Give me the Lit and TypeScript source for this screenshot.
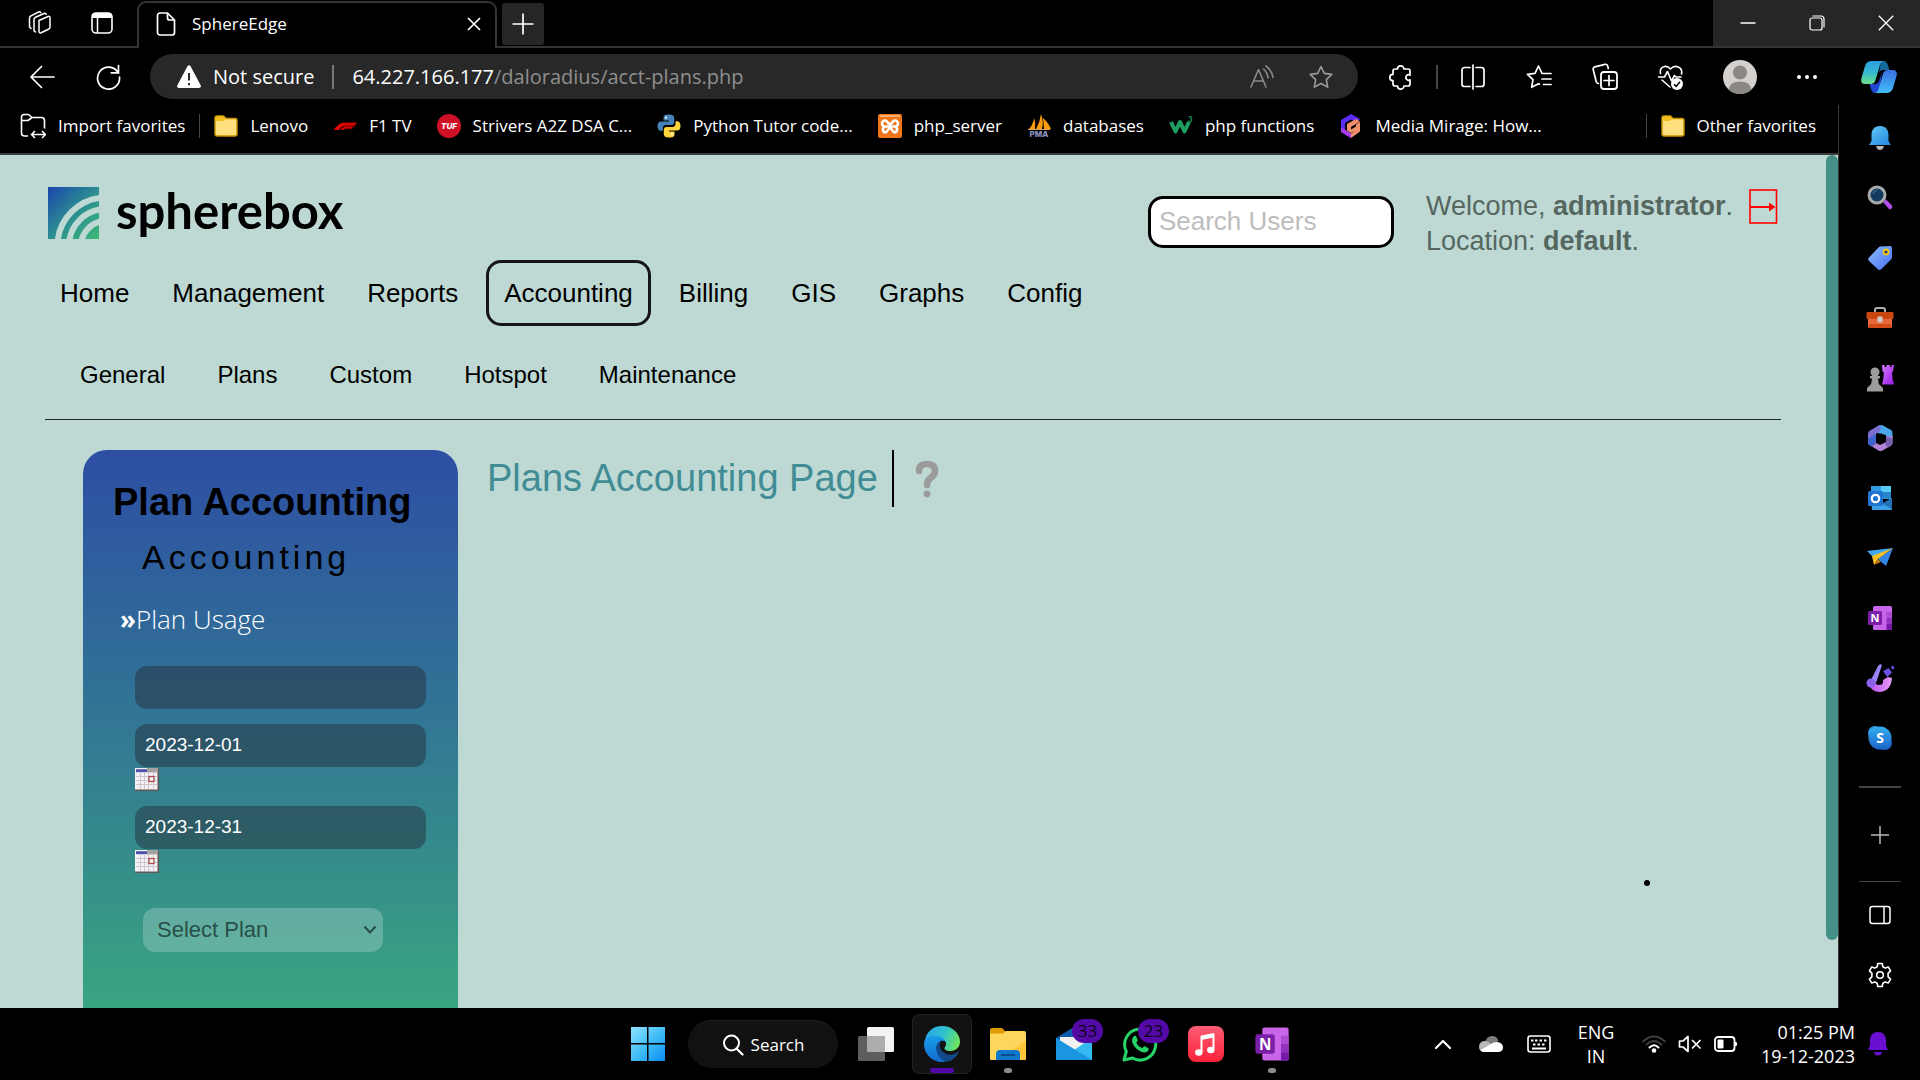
import { LitElement, html, svg, css, TemplateResult, SVGTemplateResult } from "lit";
import { customElement } from "lit/decorators.js";

const icon = (w: number, h: number, body: SVGTemplateResult): TemplateResult =>
  html`<svg width=${w} height=${h} viewBox="0 0 ${w} ${h}" fill="none" aria-hidden="true">${body}</svg>`;

/* ---------- browser chrome ---------- */

const workspaces = icon(26, 26, svg`<g stroke="#fff" stroke-width="1.5" stroke-linejoin="round" stroke-linecap="round">
  <path d="M13 10.500l9-4q2-.8 2 1.500v9q0 1.500-1.500 2.200l-7.500 3.500q-2 .8-2-1.500z"/>
  <path d="M9.500 22l-1.500-1.200V9.500q0-1.500 1.500-2.200L18 3.500q1.500-.6 2.200.8"/>
  <path d="M5 18.500l-1.500-1.500V8q0-1.500 1.500-2.200L12.500 2q1.500-.6 2.200.6"/></g>`);
const tabActions = icon(24, 24, svg`<rect x="2" y="2" width="20" height="20" rx="4" stroke="#fff" stroke-width="1.600"/>
  <path d="M2 7V5a3 3 0 013-3h14a3 3 0 013 3v2z" fill="#fff"/><path d="M7.500 7v15" stroke="#fff" stroke-width="1.500"/>`);
const pageIcon = icon(20, 26, svg`<path d="M4 2h7.500l7 7v12.500a2.500 2.500 0 01-2.500 2.500H4a2.500 2.500 0 01-2.500-2.500v-17A2.500 2.500 0 014 2zM11.500 2v5a2 2 0 002 2h5" stroke="#fff" stroke-width="1.700" stroke-linejoin="round"/>`);
const closeSmall = icon(14, 14, svg`<path d="M1 1l12 12M13 1L1 13" stroke="#fff" stroke-width="1.700"/>`);
const plusTab = icon(22, 22, svg`<path d="M11 .5v21M.5 11h21" stroke="#fff" stroke-width="1.700"/>`);
const minimize = icon(16, 16, svg`<path d="M.5 8h15" stroke="#fff" stroke-width="1.500"/>`);
const restore = icon(16, 16, svg`<rect x="1" y="3" width="12" height="12" rx="2" stroke="#fff" stroke-width="1.200"/><path d="M3.500 1h8.500a3 3 0 013 3v8.500" stroke="#fff" stroke-width="1.200"/>`);
const closeBig = icon(16, 16, svg`<path d="M.8.8l14.400 14.400M15.200.8L.8 15.200" stroke="#fff" stroke-width="1.300"/>`);

const back = icon(26, 24, svg`<path d="M12.500 1.500L2 12l10.500 10.500M2 12h23" stroke="#fff" stroke-width="1.700" stroke-linecap="round" stroke-linejoin="round"/>`);
const reload = icon(26, 26, svg`<path d="M23 8.500A11 11 0 1024.500 13M23.500 1.500v7.300h-7.300" stroke="#fff" stroke-width="1.700" stroke-linecap="round"/>`);
const warning = icon(26, 24, svg`<path d="M11.300 1.500q1.700-2.600 3.400 0l9.800 18.500q1.200 2.800-1.500 3H3q-2.700-.2-1.500-3z" fill="#fff"/><path d="M13 8v7.500M13 18v2.200" stroke="#292929" stroke-width="2"/>`);
const readAloud = icon(26, 24, svg`<path d="M2 22L9.500 4.500 17 22M4.800 16h9.500M14.500 4q4 3.500 4.500 9M17 1q6 4.500 7 11.500" stroke="#8a8a8a" stroke-width="1.600" stroke-linecap="round" stroke-linejoin="round"/>`);
const star = icon(26, 26, svg`<path d="M13 2.500l3.300 6.900 7.500 1-5.500 5.200 1.400 7.500L13 19.500l-6.700 3.600 1.400-7.500-5.500-5.200 7.500-1z" stroke="#9a9a9a" stroke-width="1.600" stroke-linejoin="round"/>`);
const puzzle = icon(26, 26, svg`<path d="M9.500 5a3.200 3.200 0 016.400 0H20a2 2 0 012 2v4.200a2.700 2.700 0 100 4.600V20a2 2 0 01-2 2h-4.100a3.200 3.200 0 01-6.400 0H7a2 2 0 01-2-2v-3.300a3.200 3.200 0 010-6.400V7a2 2 0 012-2z" stroke="#fff" stroke-width="1.700" stroke-linejoin="round"/>`);
const split = icon(26, 26, svg`<path d="M10 3.500H4.500a2.500 2.500 0 00-2.500 2.500v14a2.500 2.500 0 002.500 2.500H10M16 3.500h5.500A2.500 2.500 0 0124 6v14a2.500 2.500 0 01-2.500 2.500H16M13 1v24" stroke="#fff" stroke-width="1.700" stroke-linecap="round"/>`);
const favorites = icon(26, 26, svg`<path d="M17 9.500h-1L12.500 2 9 9.300l-7.500 1 5.500 5.400-1.400 7.600 6.900-3.500.8.300M17.500 9.500h7.500M16 15h9M17.500 20.500H25" stroke="#fff" stroke-width="1.700" stroke-linecap="round" stroke-linejoin="round"/>`);
const collections = icon(28, 28, svg`<rect x="10" y="9" width="16" height="17" rx="3" stroke="#fff" stroke-width="1.800"/><path d="M18 12.500v10M13 17.500h10M7.500 20.500q-1.800-.2-2.300-2L2.300 7q-.6-2.300 1.500-3.200L14 1.300q2-.3 2.600 1.500l.7 2.700" stroke="#fff" stroke-width="1.700" stroke-linecap="round"/>`);
const health = icon(28, 28, svg`<path d="M3.500 10.500C2 4 9 .8 13.500 6 18 .8 26 4 24.500 11M5 17l8 7M1.500 14h6l3-5.500 4 9.500 3-5.500 1.500 1.500h5" stroke="#fff" stroke-width="1.600" stroke-linecap="round" stroke-linejoin="round"/><circle cx="20" cy="21" r="6" fill="#fff"/><path d="M17 21.200l2.200 2.200 3.800-4.600" stroke="#000" stroke-width="1.500"/>`);
const avatar = icon(34, 34, svg`<circle cx="17" cy="17" r="17" fill="#d3d0cd"/><circle cx="17" cy="12.500" r="7" fill="#8b8783"/><path d="M5.500 29.500Q7 21.500 17 21.500t11.500 8A17 17 0 0117 34a17 17 0 01-11.500-4.500z" fill="#8b8783"/>`);
const more = icon(22, 6, svg`<g fill="#fff"><circle cx="3" cy="3" r="2"/><circle cx="11" cy="3" r="2"/><circle cx="19" cy="3" r="2"/></g>`);
const copilot = icon(36, 32, svg`<defs>
  <linearGradient id="ca" x1="0" y1="0" x2="0" y2="1"><stop stop-color="#2b9fe0"/><stop offset=".5" stop-color="#36b8d0"/><stop offset="1" stop-color="#6ee08a"/></linearGradient>
  <linearGradient id="cb" x1="0" y1="0" x2="0" y2="1"><stop stop-color="#3a6fe0"/><stop offset="1" stop-color="#42bdf8"/></linearGradient></defs>
  <path d="M20 0h2q4 0 5.200 5l1 4H22q-3 0-4 3z" fill="#176a9c"/>
  <path d="M16 32h-2q-3 0-4-4l-1.500-5H14q3 0 4-3l3-9-2.500 17z" fill="#1f44d0"/>
  <path d="M11 0h12q-3 .5-4 4l-4.500 15q-1 4-5 4H4q-5 0-3.500-6L4 5q1.500-5 7-5z" fill="url(#ca)"/>
  <path d="M25 32H14q2.500-.5 3.500-4l4.500-15q1-4 5-4h5q5 0 3.500 6L32 27q-1.500 5-7 5z" fill="url(#cb)"/>`);

/* ---------- bookmark icons ---------- */

const importFav = icon(26, 26, svg`<path d="M8 23H4.500A3 3 0 011.500 20V4a2.500 2.500 0 012.500-2.500h4.500L12 4.500h9.500a3 3 0 013 3v8M1.500 7.500H8l4-3" stroke="#fff" stroke-width="1.600" stroke-linejoin="round"/><path d="M12 21.500h13M15 18l-3.500 3.500L15 25M22 18l3.500 3.500L22 25" stroke="#fff" stroke-width="1.500"/>`);
const folder = icon(24, 24, svg`<path d="M1 4a2 2 0 012-2h6.500L12 4.500h9a2 2 0 012 2V20a2 2 0 01-2 2H3a2 2 0 01-2-2z" fill="#ffdf7e" stroke="#c79400" stroke-width="1.400"/><path d="M1.500 7V4A1.500 1.500 0 013 2.500h6.200l2.300 2.200L9 7z" fill="#f0bf1f"/>`);
const f1 = icon(24, 24, svg`<path d="M1 15.500l4-4Q7.500 9 11 9h12.500l-2.300 2.300H12q-2 0-3.300 1.300L6 15.500zM8 15.500l1.800-1.800q.8-.9 2.500-.9h7l-1.300 1.400h-5q-1 0-1.500.6l-.7.7zM18 15.500l3.800-3.800" fill="#e10600" stroke="#e10600" stroke-width=".8"/>`);
const tuf = icon(24, 24, svg`<circle cx="12" cy="12" r="12" fill="#ce1126"/><text x="12" y="15" text-anchor="middle" font-family="Inter, sans-serif" font-size="8" font-weight="800" font-style="italic" fill="#fff">TUF</text>`);
const python = icon(24, 24, svg`<path d="M12 .5c-5 0-5.500 1.500-5.500 3.500v2.500H12v1H4C1.500 7.500.5 9.500.5 12s1 4.800 3 4.800h2.300V14c0-1.800 1.500-3 3.200-3h5.500c1.700 0 2.700-1.200 2.700-2.700V4C17.200 1.500 15.500.5 12 .5z" fill="#4683b8"/><circle cx="9" cy="3.700" r="1.100" fill="#fff"/><path d="M12 23.500c5 0 5.500-1.500 5.500-3.500v-2.500H12v-1h8c2.500 0 3.500-2 3.500-4.500s-1-4.800-3-4.800h-2V10c0 1.800-1.500 3-3.200 3H9.500c-1.700 0-2.700 1.200-2.700 2.700V20c0 2.500 1.700 3.500 5.200 3.500z" fill="#ffd53e"/><circle cx="15" cy="20.300" r="1.100" fill="#fff"/>`);
const xampp = icon(24, 24, svg`<rect width="24" height="24" rx="2" fill="#ef7518"/><path d="M2 2h20" stroke="#ffc18d" stroke-width="1.500"/><path d="M7 18.500a3.200 3.200 0 010-6h10a3.200 3.200 0 010 6c-3 0-2-4-5-4s-2 4-5 4zM7 6.500a3 3 0 000 6h10a3 3 0 000-6c-3 0-2 3.500-5 3.500s-2-3.500-5-3.500z" stroke="#fff" stroke-width="2.600"/>`);
const pma = icon(24, 24, svg`<path d="M2 15Q6 11 7 4q2 5 1 11zM9 15q4-7 5-15 3 8 1 15zM17 15q-.5-6-1-11 5 4 8 11z" fill="#f89c0e"/><path d="M1 15.500h22" stroke="#d9a85b" stroke-width="1"/><text x="12" y="23" text-anchor="middle" font-family="Inter, sans-serif" font-size="8" font-weight="800" fill="#8e91bd">PMA</text>`);
const w3 = icon(24, 24, svg`<path d="M2 8l4.500 9.500L11 8l4.500 9.500L20 8" stroke="#1f9d62" stroke-width="4" stroke-linejoin="round"/><text x="19" y="8" font-family="Inter, sans-serif" font-size="7" font-weight="700" fill="#1f9d62">3</text>`);
const mirage = icon(24, 24, svg`<path d="M12 0l9 5-3.500 3.500L12 5.500 6 9v7l6 3.500v4.500l-10-6V6z" fill="#5b2cf5"/><path d="M12 19.500V24L2 18v-5l4 2.500z" fill="#a53af0"/><path d="M8 10l9-5 4 2.500-9 5.500v2.500l5-3v-2l4-2.500v9.500L12 24v-4.500l5-3-5 2.500-4-2.500z" fill="#f0906b"/>`);

/* ---------- sidebar icons ---------- */

const sBell = icon(26, 28, svg`<defs><linearGradient id="sb" x1="0" y1="0" x2="1" y2="1"><stop stop-color="#63c8f6"/><stop offset="1" stop-color="#2387e0"/></linearGradient></defs><path d="M9 22h8q-1 4-4 4t-4-4z" fill="#b8b8b8"/><path d="M13 2c6 0 8.500 4 8.500 9v6l2.500 4H2l2.500-4v-6c0-5 2.500-9 8.500-9z" fill="url(#sb)"/>`);
const sSearch = icon(26, 26, svg`<path d="M16 17l3-2.500 6 6q1 3-2.500 4z" fill="#b44df0"/><circle cx="10" cy="10" r="8" fill="#123a5c" stroke="#a9a9a9" stroke-width="3"/><path d="M6 9q1-3.500 5-4" stroke="#315f86" stroke-width="1.500"/>`);
const sTag = icon(26, 26, svg`<defs><linearGradient id="stg" x1="0" y1="0" x2="1" y2="1"><stop stop-color="#8ac0ff"/><stop offset="1" stop-color="#4a6df0"/></linearGradient></defs><path d="M13.500 1.500L23 1q2 0 2 2v9q0 1.500-1 2.500l-9.500 9.500q-2 1.800-4 0L2 16q-1.500-2 0-3.500L11.500 2.500q1-.9 2-1z" fill="url(#stg)"/><circle cx="19" cy="7" r="2.500" stroke="#f0cb12" stroke-width="1.800" fill="#363680"/>`);
const sTool = icon(28, 24, svg`<path d="M9 6V4q0-2 2-2h6q2 0 2 2v2" stroke="#b1aba7" stroke-width="2"/><rect x="2" y="11" width="24" height="11" rx="1.500" fill="#e9683c"/><path d="M3 18h22v4H3z" fill="#d34c16"/><rect x=".5" y="6" width="27" height="7" rx="1" fill="#c8480f"/><rect x="11.500" y="10.500" width="5" height="6" rx="1" fill="#cfcdca"/>`);
const sChess = icon(28, 28, svg`<defs><linearGradient id="sc" x1="0" y1="0" x2="1" y2="1"><stop stop-color="#d07bfb"/><stop offset="1" stop-color="#9a18e8"/></linearGradient></defs><path d="M16 1h2.500v2h2V1h3.500v2h1.500V1H28l-1 6.500-1 1 .8 8 1.500 4H16l1-4 1-8-1.500-1z" fill="url(#sc)"/><g fill="#9c9c9c"><circle cx="9" cy="8" r="4.500"/><path d="M4 12h10v2.500h-2l.8 5.500L17 24v3.500H1V24l4.200-4 .8-5.500H4z"/></g>`);
const s365 = icon(26, 28, svg`<path d="M12 1.500q2-1 4 0l8 4.500q1.500 1 1.500 3v6l-6.500-2.500V11L9 8.500V3z" fill="#4aa6ea"/><path d="M10 2.500L3 6.500q-2 1-2 3v9q0 2 2 3l2 1 4-4V10l4-3 1-6q-2-.3-4 1.500z" fill="#7a6fd0"/><path d="M9 10v8.500l-4 4-2-1q-2-1-2-3V15z" fill="#3f63cc"/><path d="M25.500 12v7q0 2-2 3l-8 4.500q-2 1-4 0L5 22.500 9 19l4 2 6-3v-5.500z" fill="#b184d8"/><path d="M19 12.500l6.500 2v4.500q0 2-2 3l-3 1.700-3-5 1.500-.8z" fill="#785fae"/><path d="M14 9.500l4.500 2.500v5l-4.500 2.700L9.500 17v-5z" fill="#000"/>`);
const sOutlook = icon(26, 26, svg`<rect x="4" y="1" width="20" height="13" fill="#2f9be2"/><path d="M14 1h10v6H14z" fill="#5acbf8"/><path d="M14 7h10v6H14z" fill="#2883cf"/><path d="M4 13l11 6 10-6v11a1 1 0 01-1 1H5z" fill="#3c9fe5"/><path d="M25 13v11L15 18.500z" fill="#236fb8"/><rect x="1" y="6" width="15" height="15" rx="1.500" fill="#1f73d3"/><circle cx="8.500" cy="13.500" r="3.700" stroke="#fff" stroke-width="2.200"/>`);
const sPlane = icon(28, 24, svg`<path d="M1 5l26-3L7 11z" fill="#44a8f0"/><path d="M27 2L12 13l8 7z" fill="#3188e8"/><path d="M27 2L6 10l2 9 4-6z" fill="#fdbf24"/><path d="M8 19l4-6 3 3z" fill="#ba7714"/>`);
const oneNote = (s: number) => html`<svg width=${s} height=${s} viewBox="0 0 26 26" fill="none" aria-hidden="true"><rect x="6" y="1" width="19" height="24" rx="1.500" fill="#c865e8"/><path d="M19.500 7H25v6h-5.500z" fill="#ae4bd5"/><path d="M19.500 13H25v6h-5.500z" fill="#9332bf"/><path d="M19.500 19H25v5a1 1 0 01-1 1h-4.500z" fill="#7719aa"/><rect x="1" y="6" width="14" height="14" rx="1.500" fill="#7a1fa8"/><text x="8" y="17" text-anchor="middle" font-family="Open Sans, sans-serif" font-size="11" font-weight="700" fill="#fff">N</text></svg>`;
const sDesigner = icon(30, 30, svg`<defs><linearGradient id="sd" x1="0" y1="0" x2="1" y2="0"><stop stop-color="#b94df0"/><stop offset="1" stop-color="#e69af8"/></linearGradient></defs><path d="M3 20q3 9 12 9 11-1 12-14l-4-1-5 3q1 5-4 5-4 0-4-4z" fill="url(#sd)"/><path d="M13 3q2-3 4-1L11 20l-5-3z" fill="#9b82f5"/><circle cx="6" cy="20" r="4.500" fill="#8d62ea"/><path d="M18 9l5-4 4 4-4 5zM25 4l2-2 2 2-2 2z" fill="#6b4fe8" transform="rotate(8 23 9)"/>`);
const sSkype = icon(26, 26, svg`<defs><linearGradient id="ss" x1="0" y1="0" x2="0" y2="1"><stop stop-color="#34aef0"/><stop offset="1" stop-color="#1c64c8"/></linearGradient></defs><circle cx="8" cy="8" r="7" fill="#2fa3ea"/><circle cx="18" cy="18" r="7" fill="#1c64c8"/><circle cx="13" cy="13" r="11.500" fill="url(#ss)"/><text x="13" y="18" text-anchor="middle" font-family="Open Sans, sans-serif" font-size="14" font-weight="700" fill="#fff">S</text>`);
const sPlus = icon(20, 20, svg`<path d="M10 1v18M1 10h18" stroke="#b9b9b9" stroke-width="1.500"/>`);
const sPanel = icon(22, 20, svg`<rect x="1" y="1.500" width="20" height="17" rx="2.500" stroke="#fff" stroke-width="1.500"/><path d="M15 1.500v17" stroke="#fff" stroke-width="1.500"/>`);
const sGear = icon(26, 26, svg`<path d="M10.800 1.500h4.400l.7 3.300 2.300 1.300 3.200-1 2.200 3.800-2.500 2.300v3.600l2.500 2.300-2.200 3.800-3.200-1-2.300 1.300-.7 3.300h-4.400l-.7-3.300-2.300-1.300-3.200 1-2.200-3.800 2.500-2.300v-3.600L2.400 8.900l2.200-3.800 3.200 1 2.300-1.300z" stroke="#fff" stroke-width="1.600" stroke-linejoin="round"/><circle cx="13" cy="13" r="3.300" stroke="#fff" stroke-width="1.600"/>`);

/* ---------- taskbar icons ---------- */

const start = icon(36, 36, svg`<defs><linearGradient id="tw" x1="0" y1="0" x2="1" y2="1"><stop stop-color="#8fe3ff"/><stop offset=".5" stop-color="#43bdf8"/><stop offset="1" stop-color="#0a8ef2"/></linearGradient></defs><path d="M1 1h16v16H1zM18.500 1H35v16H18.500zM1 18.500h16V35H1zM18.500 18.500H35V35H18.500z" fill="url(#tw)"/>`);
const magnifier = icon(22, 22, svg`<circle cx="9.500" cy="9" r="7.500" stroke="#fff" stroke-width="2"/><path d="M14.500 14.500l6 6" stroke="#fff" stroke-width="2.200" stroke-linecap="round"/>`);
const taskView = icon(36, 36, svg`<rect x="9" y="1" width="27" height="25" rx="1.500" fill="#f3f3f3"/><rect y="10" width="27" height="25" rx="1.500" fill="#5e5e5e"/><path d="M9 10h18v16H10.500A1.500 1.500 0 019 24.500z" fill="#adadad"/>`);
const edge = icon(36, 36, svg`<defs>
  <linearGradient id="ea" x1="0" y1=".3" x2="1" y2=".6"><stop stop-color="#2ba7e8"/><stop offset=".5" stop-color="#30c3cf"/><stop offset="1" stop-color="#70e55a"/></linearGradient>
  <linearGradient id="eb" x1="0" y1="0" x2="0" y2="1"><stop stop-color="#1aa0ea"/><stop offset="1" stop-color="#1169cf"/></linearGradient></defs>
  <path d="M1 15C2 6 9 0 18 0c11 0 18 8 18 15.500 0 5.500-4 9.500-9.500 9.500-4.500 0-6-1.500-6-2.700 0-1.300 1.500-1.800 1.500-4.300 0-4-4-7-9-7-5.500 0-9.500 1.500-12 4z" fill="url(#ea)"/>
  <path d="M0 18c0-6 5-8.500 10.500-8.500 6 0 10 3 11.300 6.200C17 13 12.500 17 12.500 22c0 6 4 11 9.500 13.500-1.300.4-2.600.5-4 .5C8 36 0 28 0 18z" fill="url(#eb)"/>
  <path d="M12.500 22c0-4 2.500-7 5.500-8 0 0-4.500 5-.5 10.500 4 5 11.500 5.500 16 1.500 1-.8 1.500 0 1 .8C32 31.500 27.500 36 22 35.500c-5.500-1.500-9.500-7.500-9.500-13.500z" fill="#114a8b"/>`);
const explorer = icon(36, 36, svg`<path d="M0 4q0-2 2-2h10l4 4v6H0z" fill="#e19c05"/><path d="M0 7.500h13l3-2.500h18q2 0 2 2v26q0 1-1.500 1H1.500Q0 34 0 33z" fill="#ffd65c"/><path d="M36 15v18q0 1-1.500 1H6z" fill="#f9bf28" opacity=".7"/><path d="M6 34v-6q0-4 4-4h16q4 0 4 4v6z" fill="#0f77cc"/><path d="M11 29h14" stroke="#083f78" stroke-width="1.500"/>`);
const mail = icon(36, 36, svg`<path d="M0 12L18 1l18 11v21H0z" fill="#0c5bad"/><path d="M4 11h28v8L18 27 4 16z" fill="#f1f1f1"/><path d="M0 12l18 12 18-12v22H0z" fill="#35b9f1"/><path d="M0 12l36 22H0z" fill="#1b95e0"/>`);
const whatsapp = icon(36, 36, svg`<path d="M2 34l2.300-8.500A15.500 15.500 0 1110.500 32z" stroke="#25d366" stroke-width="3" stroke-linejoin="round"/><path d="M11.500 10.500c1-1 2.500-.8 3 .5l1.200 3c.3 1-1.400 2.300-1.400 2.800 1.200 2.500 3 4.200 5.700 5.300.8 0 1.800-2.200 2.700-1.900l3.300 1.700c1 .5.8 2.300-.3 3.300-1.700 1.500-4 1.600-6.500.5-4.500-2-7-4.700-8.700-8.700-.8-2.500-.5-4.800 1-6.500z" fill="#25d366"/>`);
const music = icon(36, 36, svg`<defs><linearGradient id="tm" x1="0" y1="0" x2="0" y2="1"><stop stop-color="#fb5c74"/><stop offset="1" stop-color="#fa233b"/></linearGradient></defs><rect width="36" height="36" rx="8" fill="url(#tm)"/><path d="M13 9.500L26 7v4.500L13 14z" fill="#fff"/><path d="M13.500 10v16M25.500 8v15.500" stroke="#fff" stroke-width="2"/><ellipse cx="10.800" cy="26.500" rx="3.700" ry="3.200" fill="#fff"/><ellipse cx="22.800" cy="24" rx="3.700" ry="3.200" fill="#fff"/>`);
const chevronUp = icon(18, 12, svg`<path d="M2 10l7-7 7 7" stroke="#fff" stroke-width="2.200" stroke-linecap="round" stroke-linejoin="round"/>`);
const cloud = icon(24, 18, svg`<path d="M6 7q2-6 7-6 5 0 6.500 5l-6 3z" fill="#7d7d7d"/><path d="M5 17q-5-.5-5-5.500Q.500 6 6 6q3 0 6 2.500L16 11z" fill="#b9b9b9"/><path d="M1.500 15L12 9q2-2 6-2 6 .5 6 5.500 0 4-4.500 4.500H5q-2.500 0-3.500-2z" fill="#fff"/>`);
const keyboard = icon(24, 18, svg`<rect x="1" y="1" width="22" height="16" rx="2.500" stroke="#fff" stroke-width="1.600"/><path d="M4 5.500h2.500m1.500 0h2.500m2 0h2.500m2 0h2.500M6 9.500h2.500m2 0h2.500m2 0h2.500M5 13.500h14" stroke="#fff" stroke-width="1.800"/>`);
const wifi = icon(24, 18, svg`<path d="M1 6.500q11-10 22 0M4.500 9.500q7.500-7 15 0" stroke="#3f3f3f" stroke-width="1.800" stroke-linecap="round"/><path d="M7.500 12.500q4.500-4.500 9 0" stroke="#fff" stroke-width="2" stroke-linecap="round"/><circle cx="12" cy="15.500" r="2.300" fill="#fff"/>`);
const muted = icon(24, 18, svg`<path d="M1.500 6H5l5-4.500v15L5 12H1.500z" stroke="#fff" stroke-width="1.700" stroke-linejoin="round"/><path d="M14.500 5.500l7.500 7.500M22 5.500L14.500 13" stroke="#fff" stroke-width="1.700" stroke-linecap="round"/>`);
const battery = icon(24, 18, svg`<rect x="1" y="2" width="19.500" height="14" rx="3" stroke="#fff" stroke-width="1.800"/><rect x="3.500" y="4.500" width="6" height="9" rx="1" fill="#fff"/><path d="M21 7h1.500q1.500 2 0 4H21z" fill="#fff"/>`);
const bellTray = icon(20, 24, svg`<path d="M10 0c5 0 8 3.500 8 8v5.500l2 4.500H0l2-4.500V8c0-4.500 3-8 8-8zM6 20h8q-.5 3.500-4 3.500T6 20z" fill="#6a0fd0"/>`);

/* ---------- page icons ---------- */

const brandMark = icon(51, 52, svg`<defs><linearGradient id="bm" x1="0" y1="0" x2="1" y2="1"><stop stop-color="#1b45ad"/><stop offset=".5" stop-color="#2b8d92"/><stop offset="1" stop-color="#3bb878"/></linearGradient></defs>
  <rect width="51" height="52" fill="url(#bm)"/><g stroke="#bed9d4" stroke-width="6"><circle cx="58" cy="59" r="25"/><circle cx="58" cy="59" r="37"/><circle cx="58" cy="59" r="48.500"/></g>`);
const logout = icon(29, 35, svg`<rect x="1" y="1" width="26.500" height="33" stroke="#f00" stroke-width="1.600"/><path d="M1 18h24" stroke="#f00" stroke-width="2"/><path d="M20 13.500l6.500 4.500-6.500 4.500z" fill="#f00"/>`);
const help = icon(24, 38, svg`<path d="M4 11q0-7 8-7t8 7q0 4-4.500 7-3.500 2.500-3.500 7" stroke="#9b9b9b" stroke-width="6.500" stroke-linecap="round"/><circle cx="12" cy="34" r="3.400" fill="#9b9b9b"/>`);
const calendar = icon(24, 23, svg`<rect width="24" height="23" fill="#5c5550"/><rect width="22.500" height="21.500" fill="#f4f1f4"/><path d="M12 0h10.500v4.500H12z" fill="#a5a2a2"/><path d="M1 1.200h11v3H1z" fill="#5151a8"/><path d="M5.500 5v16M9.500 5v16M13.500 5v16M18.500 5v16M1 8.500h21M1 12.500h21M1 16.500h21" stroke="#ccc5cd" stroke-width="1"/><rect x="14" y="8.500" width="5" height="5" stroke="#ad4a4a" stroke-width="1.300" fill="#f4f1f4"/>`);
const chevronDown = icon(14, 10, svg`<path d="M1.500 1.500L7 7.500l5.500-6" stroke="#28504a" stroke-width="2"/>`);

const bookmarks: Array<[TemplateResult, string]> = [
  [folder, "Lenovo"],
  [f1, "F1 TV"],
  [tuf, "Strivers A2Z DSA C..."],
  [python, "Python Tutor code..."],
  [xampp, "php_server"],
  [pma, "databases"],
  [w3, "php functions"],
  [mirage, "Media Mirage: How..."],
];

const sideApps: Array<[TemplateResult, string]> = [
  [sBell, "Notifications"],
  [sSearch, "Search"],
  [sTag, "Shopping"],
  [sTool, "Tools"],
  [sChess, "Games"],
  [s365, "Microsoft 365"],
  [sOutlook, "Outlook"],
  [sPlane, "Drop"],
  [oneNote(26), "OneNote"],
  [sDesigner, "Designer"],
  [sSkype, "Skype"],
];

@customElement("browser-bar")
export class BrowserBar extends LitElement {
  static styles = css`
    :host { display: block; background: #000; color: #fff; font: 18px/24px "Open Sans", "Noto Sans", sans-serif; }
    svg { display: block; flex: none; }
    button { border: 0; padding: 0; background: none; color: inherit; font: inherit; display: flex; align-items: center; justify-content: center; flex: none; }
    .strip { display: flex; height: 46px; border-bottom: 2px solid #343434; }
    .lead { width: 137px; display: flex; align-items: center; padding-left: 7px; box-sizing: border-box; }
    .lead button { width: 63px; height: 42px; }
    .tab { width: 360px; box-sizing: border-box; display: flex; align-items: center; gap: 16px; padding: 0 14px 4px 17px; margin: 1px 0 -2px; border: 2px solid #343434; border-bottom: 0; border-radius: 9px 9px 0 0; background: #000; font-size: 17px; }
    .name { flex: 1; }
    .new { width: 42px; height: 42px; margin: 3px 0 0 5px; background: #262626; border-radius: 3px; }
    .win { margin-left: auto; display: flex; background: #262626; }
    .win button { width: 69px; }
    .tools { display: flex; align-items: center; height: 57px; padding-left: 9px; }
    .tools button { width: 66px; height: 45px; }
    .tools .wide { width: 71px; }
    .tools .dots { width: 63px; }
    .tools .pilot { width: 82px; }
    .address { flex: 1; min-width: 0; display: flex; align-items: center; height: 45px; margin: 0 10px 0 9px; padding: 0 8px 0 26px; box-sizing: border-box; border-radius: 23px; background: #282828; font-size: 20px; }
    .secure { margin-left: 11px; white-space: nowrap; }
    .bar { width: 2px; height: 24px; margin: 0 18px; background: #777; flex: none; }
    .url { flex: 1; min-width: 0; white-space: nowrap; color: #8f8f8f; }
    .host { color: #fff; }
    .address button { width: 59px; }
    .sep { width: 2px; height: 24px; margin: 0 2px; background: #454545; }
  `;
  render() {
    return html`
      <div class="strip">
        <div class="lead">
          <button aria-label="Workspaces">${workspaces}</button>
          <button aria-label="Tab actions">${tabActions}</button>
        </div>
        <div class="tab">${pageIcon}<span class="name">SphereEdge</span><button aria-label="Close tab">${closeSmall}</button></div>
        <button class="new" aria-label="New tab">${plusTab}</button>
        <div class="win">
          <button aria-label="Minimize">${minimize}</button>
          <button aria-label="Restore">${restore}</button>
          <button aria-label="Close">${closeBig}</button>
        </div>
      </div>
      <div class="tools">
        <button aria-label="Back">${back}</button>
        <button aria-label="Refresh">${reload}</button>
        <div class="address">
          ${warning}<span class="secure">Not secure</span><span class="bar"></span>
          <span class="url"><span class="host">64.227.166.177</span>/daloradius/acct-plans.php</span>
          <button aria-label="Read aloud">${readAloud}</button>
          <button aria-label="Add to favorites">${star}</button>
        </div>
        <button aria-label="Extensions">${puzzle}</button>
        <span class="sep"></span>
        <button aria-label="Split screen">${split}</button>
        <button aria-label="Favorites">${favorites}</button>
        <button aria-label="Collections">${collections}</button>
        <button aria-label="Browser essentials">${health}</button>
        <button class="wide" aria-label="Profile">${avatar}</button>
        <button class="dots" aria-label="Settings and more">${more}</button>
        <button class="pilot" aria-label="Copilot">${copilot}</button>
      </div>`;
  }
}

@customElement("bookmark-bar")
export class BookmarkBar extends LitElement {
  static styles = css`
    :host { display: flex; align-items: center; gap: 25px; height: 50px; padding: 0 22px 6px 20px; box-sizing: border-box; background: #000; border-bottom: 2px solid #3b3b3b; color: #fff; font: 17px/24px "Open Sans", "Noto Sans", sans-serif; }
    svg { display: block; flex: none; }
    a { display: flex; align-items: center; gap: 12px; color: inherit; text-decoration: none; white-space: nowrap; }
    .sep { width: 1px; height: 24px; background: #444; margin: 0 -11px; flex: none; }
    .end { margin-left: auto; }
  `;
  render() {
    return html`
      <a href="#">${importFav}Import favorites</a>
      <span class="sep"></span>
      ${bookmarks.map(([i, t]) => html`<a href="#">${i}${t}</a>`)}
      <span class="sep end"></span>
      <a href="#">${folder}Other favorites</a>`;
  }
}

@customElement("side-rail")
export class SideRail extends LitElement {
  static styles = css`
    :host { display: flex; flex-direction: column; align-items: center; width: 82px; box-sizing: border-box; flex: none; background: #000; border-left: 1px solid #3b3b3b; padding-top: 3px; }
    svg { display: block; }
    button { border: 0; padding: 0; background: none; width: 60px; height: 60px; display: flex; align-items: center; justify-content: center; flex: none; }
    .sep { width: 42px; height: 1px; background: #444; flex: none; }
    .first { height: 2px; margin: 18px 0 17px; }
    .foot { margin-top: auto; padding-bottom: 3px; display: flex; flex-direction: column; align-items: center; }
    .foot .sep { margin-bottom: 3px; }
  `;
  render() {
    return html`
      ${sideApps.map(([i, t]) => html`<button aria-label=${t}>${i}</button>`)}
      <span class="sep first"></span>
      <button aria-label="Customize">${sPlus}</button>
      <div class="foot">
        <span class="sep"></span>
        <button aria-label="Hide sidebar">${sPanel}</button>
        <button aria-label="Settings">${sGear}</button>
      </div>`;
  }
}

@customElement("sphere-page")
export class SpherePage extends LitElement {
  static styles = css`
    :host { display: flex; flex: 1; min-height: 0; overflow: hidden; background: #bed9d4; color: #000; font: 26px/36px "Liberation Sans", Arial, sans-serif; }
    svg { display: block; flex: none; }
    a { color: inherit; text-decoration: none; }
    .page { flex: 1; min-width: 0; display: flex; flex-direction: column; padding: 0 45px; }
    .head { display: flex; justify-content: space-between; align-items: flex-start; padding: 32px 3px 1px; }
    .brand { display: flex; align-items: flex-start; gap: 17px; font: 700 49px/46px Lato, sans-serif; height: 52px; }
    .user { display: flex; align-items: flex-start; padding-top: 2px; }
    .search { width: 246px; height: 52px; box-sizing: border-box; margin: 7px 32px 0 0; padding: 0 8px 2px; border: 3px solid #000; border-radius: 15px; background: #fff; font: inherit; color: #000; }
    .search::placeholder { color: #bdbdbd; opacity: 1; }
    .who { font-size: 27px; line-height: 35px; color: #55675f; margin-right: 16px; white-space: nowrap; }
    .who p { margin: 0; }
    .nav { display: flex; align-items: center; gap: 13px; }
    .nav a { padding: 12px 15px; }
    .nav .on { border: 3px solid #151515; border-radius: 15px; }
    .sub { display: flex; gap: 52px; padding: 35px 35px 30px; font-size: 24px; line-height: 28px; border-bottom: 1px solid #1d2b2a; }
    .main { flex: 1; display: flex; align-items: stretch; gap: 29px; padding: 30px 0 0 38px; min-height: 0; }
    .panel { width: 375px; flex: none; box-sizing: border-box; padding: 30px 32px 0 30px; border-radius: 24px 24px 0 0; background: linear-gradient(#2d4ea4, #317395 45%, #39a581); }
    h1, h2, h3 { margin: 0; font-weight: 400; }
    .panel h2 { font-size: 38px; line-height: 44px; font-weight: 700; white-space: nowrap; }
    .panel h3 { font-size: 34px; line-height: 40px; letter-spacing: 4px; margin: 13px 0 0 29px; }
    .usage { display: block; margin: 24px 0 0 7px; color: #fff; font: 300 26px/36px "Open Sans", "Noto Sans", sans-serif; }
    .usage b { font-weight: 700; }
    .form { display: flex; flex-direction: column; gap: 15px; margin: 29px 0 0 22px; }
    .field { width: 100%; height: 43px; display: block; box-sizing: border-box; border: 0; border-radius: 12px; padding: 0 10px 2px; background: rgba(37, 48, 62, 0.5); color: #fff; font: 19px/24px "Liberation Sans", Arial, sans-serif; }
    .pick { border: 0; padding: 0; background: none; display: block; margin-top: 1px; }
    .plan { display: grid; align-items: center; width: 240px; margin: 20px 0 0 8px; }
    .plan > * { grid-area: 1 / 1; }
    .plan svg { justify-self: end; margin-right: 6px; pointer-events: none; }
    select { appearance: none; height: 44px; border: 0; border-radius: 12px; padding: 0 14px; background: rgba(255, 255, 255, 0.22); color: #28504a; font: 22px/28px "Liberation Sans", Arial, sans-serif; }
    .title { display: flex; align-items: center; height: 57px; color: #418c95; }
    .title h1 { font-size: 38px; line-height: 57px; padding-right: 14px; border-right: 2px solid #000; white-space: nowrap; }
    .help { border: 0; padding: 0; background: none; margin-left: 21px; }
    .thumb { width: 12px; height: 92%; border-radius: 6px; background: #449087; flex: none; }
    .spot { position: absolute; left: 1644px; top: 880px; width: 6px; height: 6px; border-radius: 3px; background: #000; }
  `;
  render() {
    const dateField = (label: string, value: string) => html`<div>
      <input class="field" aria-label=${label} .value=${value} />
      <button class="pick" aria-label="Pick ${label}">${calendar}</button>
    </div>`;
    return html`
      <div class="page">
        <header class="head">
          <a class="brand" href="#">${brandMark}spherebox</a>
          <div class="user">
            <input class="search" aria-label="Search Users" placeholder="Search Users" />
            <div class="who">
              <p>Welcome, <b>administrator</b>.</p>
              <p>Location: <b>default</b>.</p>
            </div>
            <a href="#" aria-label="Log out">${logout}</a>
          </div>
        </header>
        <nav class="nav">
          ${["Home", "Management", "Reports", "Accounting", "Billing", "GIS", "Graphs", "Config"].map(
            (t) => html`<a href="#" class=${t === "Accounting" ? "on" : ""}>${t}</a>`
          )}
        </nav>
        <nav class="sub">
          ${["General", "Plans", "Custom", "Hotspot", "Maintenance"].map((t) => html`<a href="#">${t}</a>`)}
        </nav>
        <div class="main">
          <aside class="panel">
            <h2>Plan Accounting</h2>
            <h3>Accounting</h3>
            <a class="usage" href="#"><b>»</b>Plan Usage</a>
            <form class="form">
              <input class="field" aria-label="Username" />
              ${dateField("start date", "2023-12-01")} ${dateField("end date", "2023-12-31")}
              <div class="plan">
                <select aria-label="Plan"><option>Select Plan</option></select>
                ${chevronDown}
              </div>
            </form>
          </aside>
          <section class="title">
            <h1>Plans Accounting Page</h1>
            <button class="help" aria-label="Help">${help}</button>
          </section>
        </div>
      </div>
      <div class="thumb"></div>
      <span class="spot"></span>`;
  }
}

@customElement("task-bar")
export class TaskBar extends LitElement {
  static styles = css`
    :host { display: grid; grid-template-columns: 1fr auto 1fr; align-items: center; height: 72px; flex: none; background: #000; color: #fff; font: 18px/24px "Open Sans", "Noto Sans", sans-serif; }
    svg { display: block; flex: none; }
    button { position: relative; border: 0; padding: 0; background: none; color: inherit; font: inherit; display: flex; align-items: center; justify-content: center; flex: none; }
    .apps { grid-column: 2; display: flex; align-items: center; gap: 6px; font-size: 17px; }
    .apps button { width: 60px; height: 60px; }
    .apps .find { width: 150px; height: 48px; border-radius: 24px; background: #111; border-top: 1px solid #222; gap: 7px; margin: 0 2px 0 4px; }
    .apps .on { background: #121212; border: 1px solid #222; border-radius: 7px; box-sizing: border-box; }
    .mark { position: absolute; left: 26px; bottom: 1px; width: 8px; height: 5px; border-radius: 3px; background: #8b8b8b; }
    .on .mark { left: 17px; bottom: 0; width: 24px; background: #5208a8; }
    .count { position: absolute; left: 28px; top: 5px; width: 31px; height: 24px; border-radius: 12px; background: #540aa6; color: #0b0214; text-align: center; }
    .tray { grid-column: 3; display: flex; align-items: center; justify-content: flex-end; padding-right: 32px; }
    .tray button { min-width: 48px; height: 48px; }
    .status button { min-width: 36px; }
    .status { display: flex; margin: 0 17px 0 7px; }
    .lang { text-align: center; }
    .tray .lang { min-width: 66px; }
    .clock { text-align: right; }
    .tray .bell { min-width: 20px; margin-left: 13px; }
  `;
  render() {
    return html`
      <div class="apps">
        <button aria-label="Start">${start}</button>
        <button class="find">${magnifier}Search</button>
        <button aria-label="Task view">${taskView}</button>
        <button class="on" aria-label="Microsoft Edge">${edge}<span class="mark"></span></button>
        <button aria-label="File Explorer">${explorer}<span class="mark"></span></button>
        <button aria-label="Mail">${mail}<span class="count">33</span></button>
        <button aria-label="WhatsApp">${whatsapp}<span class="count">23</span></button>
        <button aria-label="Music">${music}</button>
        <button aria-label="OneNote">${oneNote(36)}<span class="mark"></span></button>
      </div>
      <div class="tray">
        <button aria-label="Show hidden icons">${chevronUp}</button>
        <button aria-label="OneDrive">${cloud}</button>
        <button aria-label="Touch keyboard">${keyboard}</button>
        <button class="lang"><span>ENG<br />IN</span></button>
        <div class="status">
          <button aria-label="Network">${wifi}</button>
          <button aria-label="Volume muted">${muted}</button>
          <button aria-label="Battery">${battery}</button>
        </div>
        <button class="clock"><span>01:25 PM<br />19-12-2023</span></button>
        <button class="bell" aria-label="Notifications">${bellTray}</button>
      </div>`;
  }
}

@customElement("app-root")
export class AppRoot extends LitElement {
  static styles = css`
    :host { display: flex; flex-direction: column; height: 100vh; overflow: hidden; position: relative; background: #000; }
    .body { flex: 1; min-height: 0; display: flex; }
    .view { flex: 1; min-width: 0; display: flex; flex-direction: column; }
  `;
  render() {
    return html`
      <browser-bar></browser-bar>
      <div class="body">
        <div class="view">
          <bookmark-bar></bookmark-bar>
          <sphere-page></sphere-page>
        </div>
        <side-rail></side-rail>
      </div>
      <task-bar></task-bar>`;
  }
}
